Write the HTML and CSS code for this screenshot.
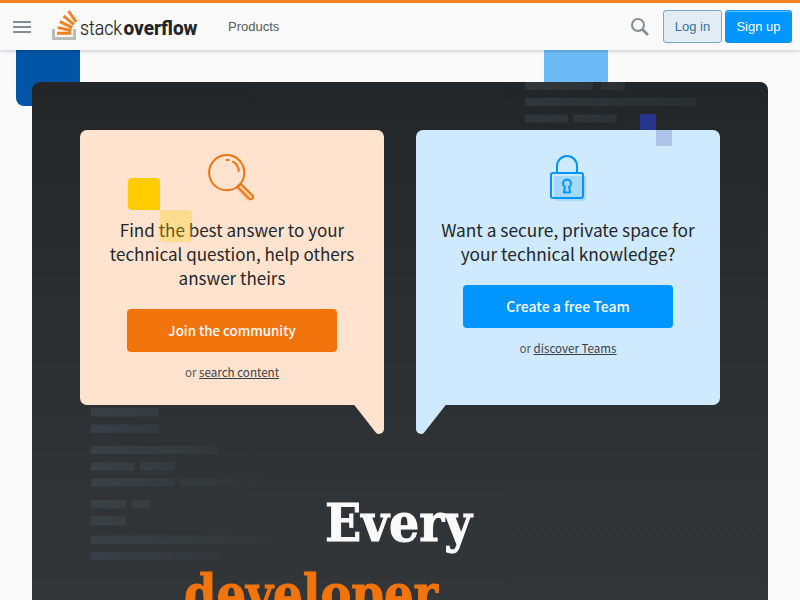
FILE: index.html
```html
<!DOCTYPE html>
<html lang="en">
<head>
<meta charset="utf-8">
<title>Stack Overflow</title>
<link rel="stylesheet" href="styles.css">
</head>
<body>
<header class="topbar">
  <button class="menu" aria-label="Menu"><i></i><i></i><i></i></button>
  <a class="logo" href="#" aria-label="Stack Overflow">
    <svg width="147" height="32" viewBox="0 0 147 32">
      <path d="M1.500 21v9.500h21V21" fill="none" stroke="#bcbbbb" stroke-width="3"/>
      <g stroke="#f48024" stroke-width="2.900"><path d="M5 25.300h14M5.700 19.700l13.700 2.800M7.800 13.600l12.500 6M11.600 7.900l10.300 8.800M16.500 3l7.600 10.800"/></g>
      <text class="logo-light" x="28" y="26.500" textLength="42" lengthAdjust="spacingAndGlyphs">stack</text>
      <text class="logo-bold" x="71.500" y="26.500" textLength="74" lengthAdjust="spacingAndGlyphs">overflow</text>
    </svg>
  </a>
  <nav class="nav"><a href="#">Products</a></nav>
  <svg class="search" width="18" height="18" viewBox="0 0 18 18"><circle cx="7" cy="7" r="6" fill="none" stroke="#848d95" stroke-width="2"/><path d="M11 11l6 6" stroke="#848d95" stroke-width="2.600"/></svg>
  <a class="btn login" href="#">Log in</a>
  <a class="btn signup" href="#">Sign up</a>
</header>
<main class="page">
  <span class="square royal"></span>
  <span class="square sky"></span>
  <section class="hero">
    <svg class="code" width="736" height="518" viewBox="32 82 736 518">
      <defs>
        <linearGradient id="a" gradientUnits="userSpaceOnUse" x1="525" x2="730" y1="0" y2="0"><stop stop-color="#303639"/><stop offset="1" stop-color="#282d30"/></linearGradient>
        <linearGradient id="b" gradientUnits="userSpaceOnUse" x1="91" x2="285" y1="0" y2="0"><stop stop-color="#3a4044"/><stop offset="1" stop-color="#3a4044" stop-opacity="0"/></linearGradient>
        <linearGradient id="c" gradientUnits="userSpaceOnUse" x1="91" x2="240" y1="0" y2="0"><stop stop-color="#393e48"/><stop offset="1" stop-color="#3a4044" stop-opacity="0"/></linearGradient>
      </defs>
      <g fill="url(#a)">
        <rect x="525" y="82" width="68" height="8"/><rect x="601" y="82" width="24" height="8"/>
        <rect x="525" y="98" width="171" height="8"/>
        <rect x="525" y="114.500" width="43" height="8"/><rect x="573.500" y="114.500" width="43.500" height="8"/>
      </g>
      <g fill="url(#b)">
        <rect x="91" y="408" width="68" height="8.500"/><rect x="91" y="446" width="127" height="8"/>
        <rect x="91" y="462.500" width="43" height="8"/><rect x="140" y="462.500" width="35" height="8"/>
        <rect x="91" y="478.500" width="84" height="8"/><rect x="180" y="478.500" width="84" height="8"/>
        <rect x="91" y="500" width="35" height="8.500"/><rect x="131.500" y="500" width="19" height="8.500"/>
        <rect x="91" y="516.500" width="35" height="8.500"/><rect x="91" y="535.500" width="185" height="8.500"/>
      </g>
      <g fill="url(#c)"><rect x="91" y="424.500" width="68" height="8.500"/><rect x="91" y="552" width="132" height="8"/></g>
    </svg>
    <div class="cards">
      <article class="card peach">
        <svg class="icon" width="48" height="48" viewBox="0 0 48 48">
          <path d="M28 35l4-4 13 13q-2 5-7 2z" fill="#f2740d" opacity=".2"/>
          <g fill="none" stroke="#f2740d" stroke-width="2"><circle cx="18.700" cy="18.700" r="17.600"/><path d="M29.300 32.700l3.200-3 11.700 11.500c2.200 2.300-.9 5.400-3.300 3.300z"/><path d="M18.500 6h2.200M25 7.700Q30 10.500 30.800 17" stroke-linecap="round"/></g>
        </svg>
        <p class="pitch">Find the best answer to your<br>technical question, help others<br>answer theirs</p>
        <a class="cta" href="#">Join the community</a>
        <p class="alt">or <a href="#">search content</a></p>
        <svg class="tail tail-right" width="31" height="30" viewBox="0 0 31 30"><path d="M0 0h31v25a5 5 0 0 1-5 5q-2 0-3.200-1.500L1.300 1z"/></svg>
        <span class="square yellow"></span>
        <span class="square yellow-soft"></span>
      </article>
      <article class="card blue">
        <svg class="icon" width="48" height="48" viewBox="0 0 48 48">
          <path d="M10 22h32v21q0 4-4 4H14q-4 0-4-4z" fill="#0095ff" opacity=".2"/>
          <g fill="none" stroke="#0095ff" stroke-width="2"><rect x="7" y="19" width="32" height="25" rx="2"/><path d="M13 19v-7a10 10 0 0 1 20 0v7"/><path d="M20.900 32.900a4 4 0 1 1 4.200 0l1 5.600h-6.200z" stroke-linejoin="round"/></g>
        </svg>
        <p class="pitch">Want a secure, private space for<br>your technical knowledge?</p>
        <a class="cta" href="#">Create a free Team</a>
        <p class="alt">or <a href="#">discover Teams</a></p>
        <svg class="tail tail-left" width="31" height="30" viewBox="0 0 31 30"><path d="M31 0H0v25a5 5 0 0 0 5 5q2 0 3.200-1.500L29.700 1z"/></svg>
        <span class="square navy"></span>
        <span class="square navy-soft"></span>
      </article>
    </div>
    <h1 class="headline">
      <svg width="430" height="160" viewBox="0 0 430 160">
        <text x="140" y="59.500" textLength="147" lengthAdjust="spacingAndGlyphs">Every</text>
        <text class="role" x="-1" y="130.500" textLength="254" lengthAdjust="spacingAndGlyphs">developer</text>
      </svg>
    </h1>
  </section>
</main>
</body>
</html>
```
FILE: styles.css
```css
* { box-sizing: border-box; }
html, body { height: 100%; overflow: hidden; }
body { margin: 0; background: #fafafb; color: #242729; font-family: "Liberation Sans", Arial, sans-serif; font-size: 13px; display: flex; flex-direction: column; }
a { color: inherit; text-decoration: none; }
p, h1 { margin: 0; }

.topbar { position: relative; z-index: 2; flex: none; height: 50px; display: flex; align-items: center; padding: 0 8px 0 13px; background: #fafafb; border-top: 3px solid #f48024; box-shadow: 0 1px 4px rgba(0,0,0,.2); }
.menu { display: flex; flex-direction: column; gap: 3px; width: 18px; padding: 0; border: 0; background: none; }
.menu i { height: 2px; background: #848d95; }
.logo { margin-left: 21px; height: 32px; align-self: flex-start; margin-top: 5px; }
.logo svg { display: block; }
.logo text { font-family: Roboto, sans-serif; font-size: 19.500px; fill: #222426; }
.logo .logo-light { font-weight: 300; stroke: #222426; stroke-width: .2px; }
.logo .logo-bold { font-weight: 800; }
.nav { margin-left: 29px; color: #535a60; }
.search { margin-left: auto; margin-right: 14px; }
.btn { height: 33px; line-height: 31px; border-radius: 3px; border: 1px solid; text-align: center; }
.login { width: 59px; color: #39739d; background: #e1ecf4; border-color: #7aa7c7; }
.signup { width: 67px; margin-left: 3px; color: #fff; background: #0095ff; border-color: #0095ff; box-shadow: inset 0 1px 0 rgba(255,255,255,.4); }

.page { position: relative; flex: 1; min-height: 0; padding: 32px 32px 0; }
.square { position: absolute; }
.royal { left: 16px; top: -8px; width: 64px; height: 64px; background: #0054a6; border-radius: 8px 8px 0 8px; }
.sky { left: 544px; top: 0; width: 64px; height: 40px; background: #6cbbf7; }
.hero { position: relative; height: 100%; padding: 48px; border-radius: 8px 8px 0 0; background: linear-gradient(#232629, #2f3336 380px, #323639); overflow: hidden; display: flex; flex-direction: column; align-items: center; }
.code { position: absolute; left: 0; top: 0; }
.cards { position: relative; width: 100%; flex: none; display: grid; grid-template-columns: 1fr 1fr; gap: 32px; height: 275px; }
.card { position: relative; display: flex; flex-direction: column; align-items: center; padding-top: 24px; font-family: "Noto Sans CJK SC", sans-serif; text-align: center; }
.peach { background: #ffe3cf; border-radius: 7px 7px 0 7px; }
.blue { background: #cfe9ff; border-radius: 7px 7px 7px 0; }
.icon { flex: none; display: block; }
.pitch { margin-top: 16px; font-size: 17.300px; line-height: 24px; white-space: nowrap; }
.peach .pitch { font-size: 17.050px; }
.cta { margin-top: 19px; width: 210px; height: 43px; line-height: 43px; border-radius: 4px; color: #fff; font-size: 14px; font-weight: 500; }
.peach .cta { background: #f2740d; font-size: 13.300px; }
.blue .cta { background: #0095ff; }
.alt { margin-top: 11px; font-size: 11.600px; line-height: 18px; color: #535a60; }
.alt a { color: #3b4045; text-decoration: underline; }
.tail { position: absolute; top: 274px; }
.tail-right { right: 0; fill: #ffe3cf; }
.tail-left { left: 0; fill: #cfe9ff; }
.yellow { left: 48px; top: 48px; width: 32px; height: 32px; background: #fc0; border-radius: 4px 4px 0 4px; }
.yellow-soft { left: 80px; top: 80px; width: 32px; height: 32px; background: #fc0; opacity: .3; border-radius: 0 4px 4px 4px; }
.navy { left: 224px; top: -16px; width: 16px; height: 16px; background: #29348e; border-radius: 2px 2px 0 2px; }
.navy-soft { left: 240px; top: 0; width: 16px; height: 16px; background: #29348e; opacity: .2; border-radius: 0 2px 2px 2px; }
.headline { position: relative; flex: none; margin-top: 76px; width: 430px; }
.headline svg { display: block; overflow: visible; }
.headline text { font-family: "DejaVu Serif", serif; font-size: 53px; font-weight: 700; fill: #fafafb; stroke: #fafafb; stroke-width: 1px; }
.headline .role { fill: #f2740d; stroke: #f2740d; }
```
